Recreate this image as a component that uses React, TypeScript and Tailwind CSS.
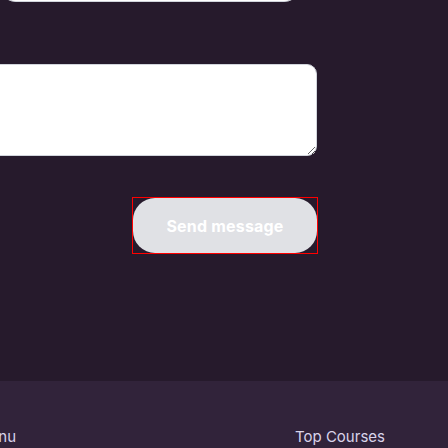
export default function App() {
  return (
    <main
      className="flex h-[448px] w-[448px] flex-col overflow-hidden bg-[#261a2c]"
      style={{ fontFamily: "Inter, 'Open Sans', sans-serif" }}
    >
      <div className="relative">
        {/* previous field, scrolled off the top */}
        <div className="mt-[-38px] h-[40px] w-[300px] rounded-2xl border-b border-gray-300 bg-white" />

        <textarea
          aria-label="Message"
          className="mt-[62px] ml-[-12px] block h-[92px] w-[329px] rounded-[10px] border border-gray-300 bg-white outline-none"
        />

        <div className="mt-[41px] ml-[132px] w-[186px] border border-[#ff0000]">
          <button
            type="button"
            className="flex h-[55px] w-full items-center justify-center rounded-[22px] bg-[#e0e1e5] text-[16px] font-bold tracking-[0.2px] text-white"
          >
            Send message
          </button>
        </div>
      </div>

      <footer className="mt-[127px] flex-1 bg-[#31233a]">
        <div className="flex pt-[45px] text-[15px] text-[#d9d4ea]">
          <span className="ml-[-24px] w-[319px]">Menu</span>
          <span>Top Courses</span>
        </div>
      </footer>
    </main>
  );
}
